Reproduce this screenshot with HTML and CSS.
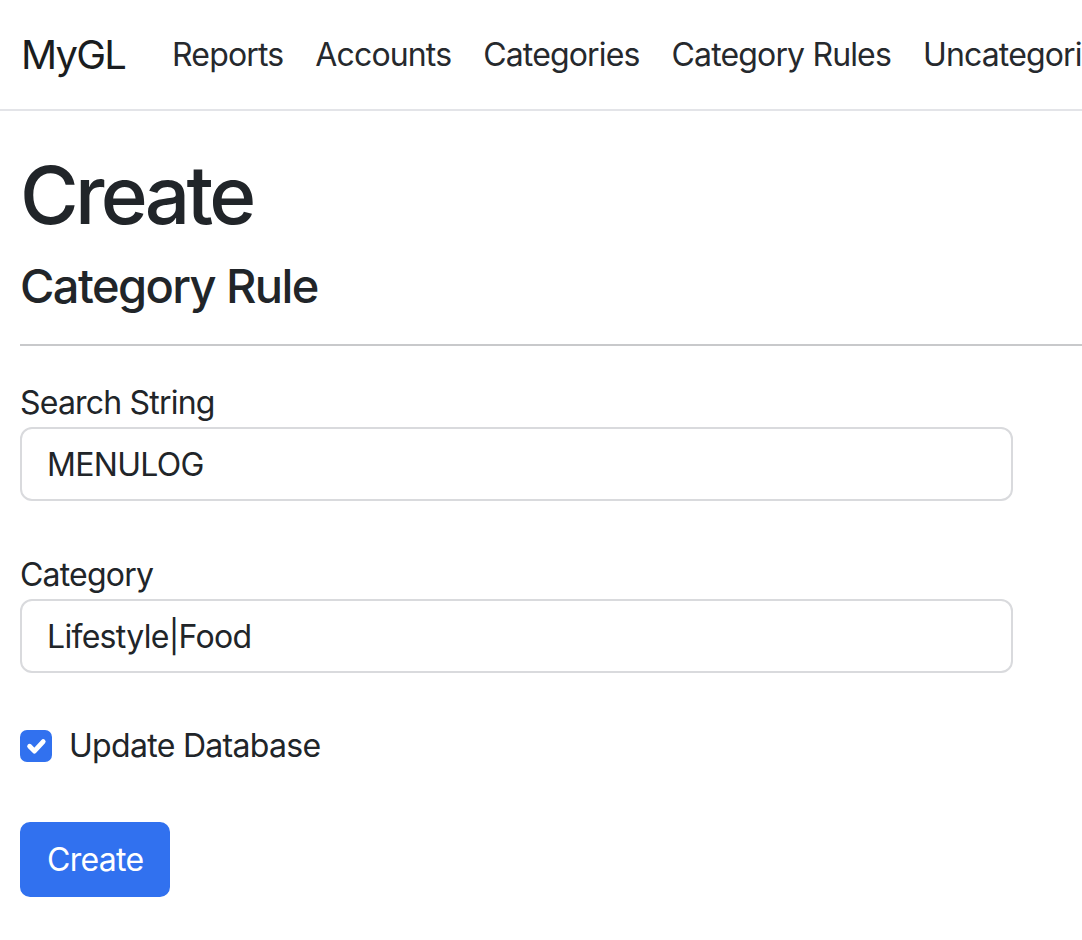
FILE: index.html
```html
<!DOCTYPE html>
<html lang="en">
<head>
<meta charset="utf-8">
<title>Create - MyGL</title>
<link rel="stylesheet" href="styles.css">
</head>
<body>
<header class="navbar">
  <div class="navbar-inner">
    <a class="brand" href="#">MyGL</a>
    <ul class="nav">
      <li><a class="nav-link" href="#">Reports</a></li>
      <li><a class="nav-link" href="#">Accounts</a></li>
      <li><a class="nav-link" href="#">Categories</a></li>
      <li><a class="nav-link" href="#">Category Rules</a></li>
      <li><a class="nav-link" href="#">Uncategorised</a></li>
    </ul>
  </div>
</header>
<main class="container">
  <h1 class="title">Create</h1>
  <h4 class="subtitle">Category Rule</h4>
  <hr class="divider">
  <form class="form">
    <div class="field">
      <label class="form-label" for="search">Search String</label>
      <input class="form-control" id="search" type="text" value="MENULOG">
    </div>
    <div class="field">
      <label class="form-label" for="category">Category</label>
      <input class="form-control" id="category" type="text" value="Lifestyle|Food">
    </div>
    <div class="check">
      <span class="check-box" aria-hidden="true">
        <svg viewBox="0 0 20 20" width="32" height="32"><path d="M6 10.2l3 3 5.5-6" fill="none" stroke="#fff" stroke-width="3" stroke-linecap="round" stroke-linejoin="round"/></svg>
      </span>
      <label class="check-label">Update Database</label>
    </div>
    <button class="btn-primary" type="button">Create</button>
  </form>
</main>
</body>
</html>
```

FILE: styles.css
```css
html, body {
  margin: 0;
  padding: 0;
  background: #fff;
  overflow: hidden;
}
body {
  font-family: Inter, "Noto Sans", "Liberation Sans", sans-serif;
  color: #212529;
  width: 1082px;
}
.navbar {
  height: 109px;
  border-bottom: 2px solid #e3e4e8;
  display: flex;
  align-items: center;
  overflow: hidden;
}
.navbar-inner {
  display: flex;
  align-items: center;
  padding-left: 21px;
  white-space: nowrap;
}
.brand {
  font-size: 40px;
  color: #1a1d20;
  text-decoration: none;
  margin-right: 31px;
  letter-spacing: -1.8px;
}
.nav {
  display: flex;
  list-style: none;
  margin: 0;
  padding: 0;
}
.nav-link {
  display: block;
  font-size: 32px;
  color: #26292d;
  text-decoration: none;
  padding: 8px 16px;
  letter-spacing: -0.85px;
}
.container {
  padding-left: 20px;
}
.title {
  font-size: 80px;
  font-weight: 500;
  line-height: 96px;
  margin: 36px 0 14px;
  letter-spacing: -3.7px;
}
.subtitle {
  font-size: 47px;
  font-weight: 500;
  line-height: 58px;
  margin: 0;
  letter-spacing: -1.6px;
}
.divider {
  border: 0;
  border-top: 2px solid #c8c9cb;
  margin: 29px 0 33px;
}
.form {
  width: 993px;
}
.field {
  margin-bottom: 50px;
}
.form-label {
  display: block;
  font-size: 32px;
  line-height: 48px;
  letter-spacing: -0.8px;
}
.form-control {
  display: block;
  box-sizing: border-box;
  width: 100%;
  height: 74px;
  padding: 11px 25px;
  font-family: inherit;
  font-size: 32px;
  line-height: 48px;
  color: #212529;
  background: #fff;
  border: 2px solid #d9dadd;
  border-radius: 12px;
  letter-spacing: -0.7px;
  outline: none;
}
.check {
  display: flex;
  align-items: center;
  gap: 17px;
  margin-top: -1px;
  height: 48px;
}
.check-box {
  width: 32px;
  height: 32px;
  border-radius: 7px;
  background: #3171ef;
  display: flex;
  align-items: center;
  justify-content: center;
}
.check-box svg {
  display: block;
}
.check-label {
  font-size: 32px;
  line-height: 48px;
  letter-spacing: -0.7px;
}
.btn-primary {
  display: block;
  margin-top: 52px;
  height: 75px;
  padding: 0 25px;
  font-family: inherit;
  font-size: 32px;
  line-height: 48px;
  color: #fff;
  background: #3171ef;
  border: 2px solid #3171ef;
  border-radius: 10px;
  letter-spacing: -0.7px;
}
```
